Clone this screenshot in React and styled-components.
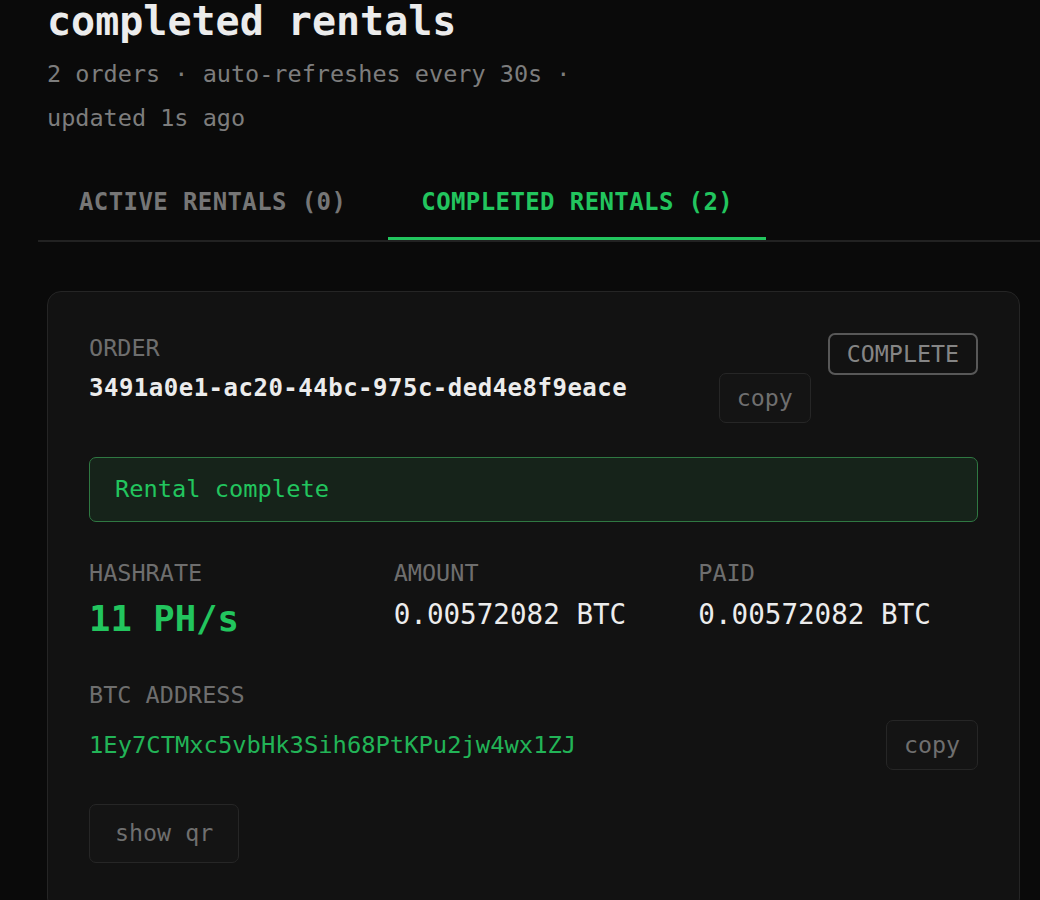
import React from "react";
import styled, { createGlobalStyle } from "styled-components";

const GlobalStyle = createGlobalStyle`
  html, body {
    margin: 0;
    padding: 0;
    background: #0a0a0a;
    overflow: hidden;
  }
  body {
    font-family: "DejaVu Sans Mono", "Liberation Mono", monospace;
    color: #ededed;
  }
`;

const Page = styled.div`
  padding: 0 20px 60px 47px;
`;

const Title = styled.h1`
  margin: 0;
  font-size: 40px;
  line-height: 42px;
  font-weight: 700;
  color: #ececec;
`;

const Subtitle = styled.p`
  margin: 10px 0 0;
  font-size: 23.5px;
  line-height: 44px;
  color: #7d7d7d;
  max-width: 560px;
`;

const TabBar = styled.div`
  display: flex;
  gap: 9px;
  margin: 27px -20px 0 -9px;
  padding-left: 8px;
  border-bottom: 2px solid #222;
`;

const Tab = styled.button`
  background: none;
  border: none;
  border-bottom: 3px solid ${(p) => (p.$active ? "#22c55e" : "transparent")};
  padding: 21px 33px;
  font-family: inherit;
  font-size: 24px;
  letter-spacing: 0.4px;
  font-weight: 700;
  color: ${(p) => (p.$active ? "#22c55e" : "#767676")};
  cursor: pointer;
`;

const Card = styled.div`
  margin-top: 49px;
  background: #121212;
  border: 1px solid #252525;
  border-radius: 14px;
  padding: 41px 41px 48px;
  display: flex;
  flex-direction: column;
  gap: 34px;
`;

const Header = styled.div`
  display: flex;
  align-items: flex-start;
  gap: 17px;
`;

const HeaderMain = styled.div`
  flex: 1;
  display: flex;
  flex-direction: column;
  gap: 10px;
`;

const Label = styled.div`
  font-size: 23.5px;
  line-height: 30px;
  color: #6e6e6e;
`;

const IdRow = styled.div`
  display: flex;
  align-items: ${(p) => p.$align || "flex-start"};
  justify-content: space-between;
`;

const OrderId = styled.div`
  font-size: 24px;
  letter-spacing: 0.5px;
  line-height: 30px;
  font-weight: 700;
  color: #ececec;
`;

const Button = styled.button`
  background: #141414;
  border: 1px solid #262626;
  border-radius: 7px;
  padding: ${(p) => (p.$large ? "14.5px 25px" : "10px 17px")};
  font-family: inherit;
  font-size: 23.3px;
  line-height: 28px;
  color: #6f6f6f;
  cursor: pointer;
`;

const Badge = styled.span`
  border: 2px solid #585858;
  border-radius: 7px;
  padding: 4px 17px;
  font-size: 23.3px;
  line-height: 30px;
  color: #858585;
`;

const Status = styled.div`
  background: #16231a;
  border: 1.5px solid #2f7842;
  border-radius: 7px;
  padding: 17px 25px;
  font-size: 23.7px;
  line-height: 29px;
  color: #22c55e;
`;

const Stats = styled.div`
  display: grid;
  grid-template-columns: repeat(3, 1fr);
  column-gap: 25px;
  margin-top: 2px;
`;

const Stat = styled.div`
  display: flex;
  flex-direction: column;
  gap: 10px;
`;

const Value = styled.div`
  font-size: ${(p) => (p.$big ? "35.6px" : "27.6px")};
  line-height: 1.2;
  font-weight: ${(p) => (p.$big ? 700 : 400)};
  color: ${(p) => (p.$big ? "#22c55e" : "#ececec")};
`;

const Section = styled.div`
  display: flex;
  flex-direction: column;
  gap: 10px;
  margin-top: 5px;
`;

const Address = styled.div`
  font-size: 23.8px;
  line-height: 30px;
  color: #22b457;
`;

const Actions = styled.div`
  display: flex;
`;

export default function App() {
  return (
    <>
      <GlobalStyle />
      <Page>
        <Title>completed rentals</Title>
        <Subtitle>
          2 orders · auto-refreshes every 30s · updated 1s ago
        </Subtitle>
        <TabBar>
          <Tab>ACTIVE RENTALS (0)</Tab>
          <Tab $active>COMPLETED RENTALS (2)</Tab>
        </TabBar>
        <Card>
          <Header>
            <HeaderMain>
              <Label>ORDER</Label>
              <IdRow>
                <OrderId>3491a0e1-ac20-44bc-975c-ded4e8f9eace</OrderId>
                <Button>copy</Button>
              </IdRow>
            </HeaderMain>
            <Badge>COMPLETE</Badge>
          </Header>
          <Status>Rental complete</Status>
          <Stats>
            <Stat>
              <Label>HASHRATE</Label>
              <Value $big>11 PH/s</Value>
            </Stat>
            <Stat>
              <Label>AMOUNT</Label>
              <Value>0.00572082 BTC</Value>
            </Stat>
            <Stat>
              <Label>PAID</Label>
              <Value>0.00572082 BTC</Value>
            </Stat>
          </Stats>
          <Section>
            <Label>BTC ADDRESS</Label>
            <IdRow $align="center">
              <Address>1Ey7CTMxc5vbHk3Sih68PtKPu2jw4wx1ZJ</Address>
              <Button>copy</Button>
            </IdRow>
          </Section>
          <Actions>
            <Button $large>show qr</Button>
          </Actions>
        </Card>
      </Page>
    </>
  );
}
